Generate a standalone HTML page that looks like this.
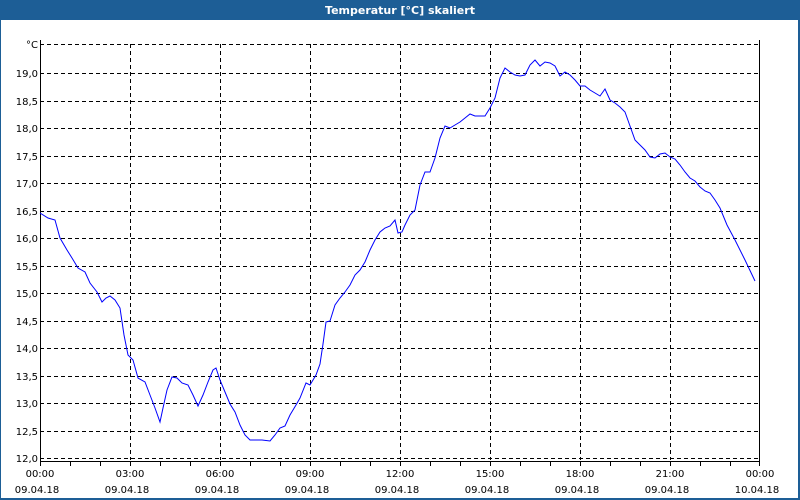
<!DOCTYPE html>
<html><head><style>
body{margin:0;width:800px;height:500px;overflow:hidden;background:#fff;font-family:"DejaVu Sans","Liberation Sans",sans-serif;}
</style></head><body>
<svg width="800" height="500" xmlns="http://www.w3.org/2000/svg" style="display:block">
<rect x="0" y="0" width="800" height="500" fill="#1d5e96"/>
<rect x="1" y="20" width="797" height="478" fill="#fff"/>
<text x="400" y="14" fill="#fff" font-size="11" font-weight="bold" text-anchor="middle" font-family="DejaVu Sans, sans-serif">Temperatur [°C] skaliert</text>
<g stroke="#000" stroke-width="1" stroke-dasharray="4,3" fill="none">
<path d="M40 44.5H760M40 73.5H760M40 128.5H760M40 183.5H760M40 238.5H760M40 293.5H760M40 348.5H760M40 403.5H760M40 458.5H760M40 101.5H760M40 156.5H760M40 211.5H760M40 266.5H760M40 321.5H760M40 376.5H760M40 431.5H760"/>
<path d="M130.5 44V460M220.5 44V460M310.5 44V460M400.5 44V460M490.5 44V460M580.5 44V460M670.5 44V460"/>
</g>
<g stroke="#000" stroke-width="1" fill="none">
<path d="M40.5 40V461.5H759.5V40"/>
<path d="M70.5 461V466M100.5 461V466M130.5 461V466M160.5 461V466M190.5 461V466M220.5 461V466M250.5 461V466M280.5 461V466M310.5 461V466M340.5 461V466M370.5 461V466M400.5 461V466M430.5 461V466M460.5 461V466M490.5 461V466M520.5 461V466M550.5 461V466M580.5 461V466M610.5 461V466M640.5 461V466M670.5 461V466M700.5 461V466M730.5 461V466M759.5 461V466M40.5 461V466"/>
</g>
<g font-size="10" fill="#000" text-anchor="end" font-family="DejaVu Sans, sans-serif">
<text x="38" y="48">°C</text>
<text x="38" y="77">19,0</text><text x="38" y="105">18,5</text><text x="38" y="132">18,0</text><text x="38" y="160">17,5</text><text x="38" y="187">17,0</text><text x="38" y="215">16,5</text><text x="38" y="242">16,0</text><text x="38" y="270">15,5</text><text x="38" y="297">15,0</text><text x="38" y="325">14,5</text><text x="38" y="352">14,0</text><text x="38" y="380">13,5</text><text x="38" y="407">13,0</text><text x="38" y="435">12,5</text><text x="38" y="462">12,0</text>
</g>
<g font-size="10" fill="#000" text-anchor="middle" font-family="DejaVu Sans, sans-serif">
<text x="40" y="477">00:00</text><text x="130" y="477">03:00</text><text x="220" y="477">06:00</text><text x="310" y="477">09:00</text><text x="400" y="477">12:00</text><text x="490" y="477">15:00</text><text x="580" y="477">18:00</text><text x="670" y="477">21:00</text><text x="760" y="477">00:00</text>
<text x="37" y="493">09.04.18</text><text x="127" y="493">09.04.18</text><text x="217" y="493">09.04.18</text><text x="307" y="493">09.04.18</text><text x="397" y="493">09.04.18</text><text x="487" y="493">09.04.18</text><text x="577" y="493">09.04.18</text><text x="667" y="493">09.04.18</text><text x="757" y="493">10.04.18</text>
</g>
<polyline fill="none" stroke="#0000ff" stroke-width="1" points="40,213 48,218 55,220 60,238 67,250 72,258 78,268 85,272 90,283 97,292 102,302 106,298 110,296 115,300 120,308 124,335 128,355 133,360 138,378 145,382 150,395 155,408 160,422 163,408 167,390 172,377 177,378 182,383 188,385 193,395 198,406 203,395 208,382 213,370 216,368 220,380 225,392 230,404 235,412 240,425 245,435 250,440 255,440 262,440 270,441 275,435 280,428 285,426 290,415 296,405 300,398 306,383 310,385 316,375 320,364 323,344 326,322 330,321 335,305 340,298 345,292 350,285 355,275 360,270 365,262 370,250 375,240 380,232 385,228 390,226 395,220 398,233 402,232 405,225 410,215 415,210 420,185 425,172 430,172 435,158 440,138 445,126 450,128 455,125 460,122 465,118 470,114 475,116 480,116 485,116 490,108 495,98 500,78 505,68 510,72 515,75 520,76 525,75 530,65 535,60 540,66 545,62 550,63 555,66 560,76 565,72 570,75 575,80 580,86 585,86 590,90 595,93 600,96 605,89 610,100 615,103 620,107 625,112 630,126 635,140 640,145 645,150 650,157 655,158 660,154 665,153 670,157 675,159 680,165 685,172 690,178 695,181 700,187 705,191 710,193 715,200 720,208 727,225 735,240 745,260 755,281"/>
</svg>
</body></html>
